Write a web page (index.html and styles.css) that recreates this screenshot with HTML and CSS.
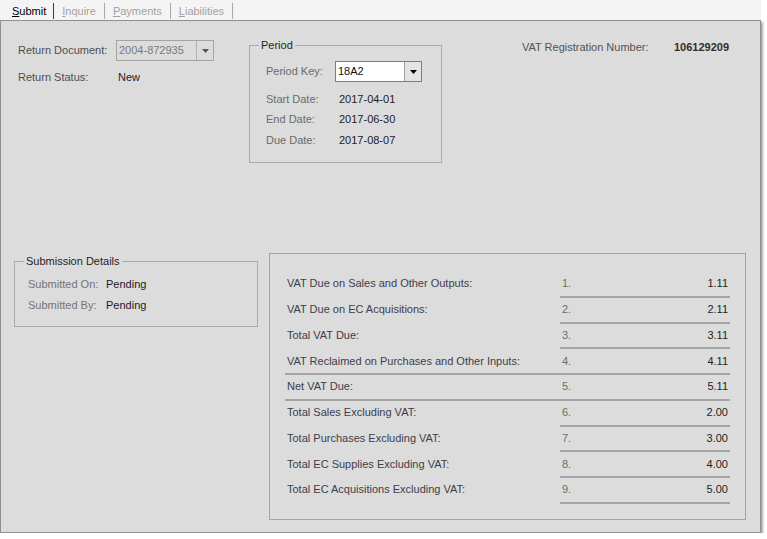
FILE: index.html
```html
<!DOCTYPE html>
<html>
<head>
<meta charset="utf-8">
<link rel="stylesheet" href="styles.css">
</head>
<body>
<div class="window">
  <div class="tabs">
    <div class="tab active"><u>S</u>ubmit</div>
    <div class="tab"><u>I</u>nquire</div>
    <div class="tab"><u>P</u>ayments</div>
    <div class="tab"><u>L</u>iabilities</div>
  </div>
  <div class="page">
    <div class="top">
      <div class="doc">
        <div class="row row-combo">
          <span class="lbl lbl-doc">Return Document:</span>
          <div class="combo combo-disabled combo-doc">
            <span class="combo-text">2004-872935</span>
            <span class="combo-btn"><svg width="7" height="4" viewBox="0 0 7 4"><path d="M0 0H7L3.5 4Z"/></svg></span>
          </div>
        </div>
        <div class="row row-status">
          <span class="lbl lbl-doc">Return Status:</span>
          <span class="val val-status">New</span>
        </div>
      </div>
      <fieldset class="group period">
        <legend>Period</legend>
        <div class="group-body period-body">
          <div class="row row-combo">
            <span class="plbl">Period Key:</span>
            <div class="combo combo-period">
              <span class="combo-text">18A2</span>
              <span class="combo-btn"><svg width="7" height="4" viewBox="0 0 7 4"><path d="M0 0H7L3.5 4Z"/></svg></span>
            </div>
          </div>
          <div class="prow first"><span class="plbl">Start Date:</span><span class="pval">2017-04-01</span></div>
          <div class="prow"><span class="plbl">End Date:</span><span class="pval">2017-06-30</span></div>
          <div class="prow"><span class="plbl">Due Date:</span><span class="pval">2017-08-07</span></div>
        </div>
      </fieldset>
      <div class="vatreg">
        <span class="vat-lbl">VAT Registration Number:</span>
        <span class="vat-val">106129209</span>
      </div>
    </div>
    <div class="bottom">
      <fieldset class="group submission">
        <legend>Submission Details</legend>
        <div class="group-body sub-body">
          <div class="srow"><span class="slbl">Submitted On:</span><span class="sval">Pending</span></div>
          <div class="srow"><span class="slbl">Submitted By:</span><span class="sval">Pending</span></div>
        </div>
      </fieldset>
      <div class="returns">
        <div class="rrow"><span class="rlbl">VAT Due on Sales and Other Outputs:</span><span class="rcell"><span class="rnum">1.</span><span class="rval">1.11</span></span></div>
        <div class="rrow"><span class="rlbl">VAT Due on EC Acquisitions:</span><span class="rcell"><span class="rnum">2.</span><span class="rval">2.11</span></span></div>
        <div class="rrow"><span class="rlbl">Total VAT Due:</span><span class="rcell"><span class="rnum">3.</span><span class="rval">3.11</span></span></div>
        <div class="rrow full"><span class="rlbl">VAT Reclaimed on Purchases and Other Inputs:</span><span class="rcell"><span class="rnum">4.</span><span class="rval">4.11</span></span></div>
        <div class="rrow full"><span class="rlbl">Net VAT Due:</span><span class="rcell"><span class="rnum">5.</span><span class="rval">5.11</span></span></div>
        <div class="rrow"><span class="rlbl">Total Sales Excluding VAT:</span><span class="rcell"><span class="rnum">6.</span><span class="rval">2.00</span></span></div>
        <div class="rrow"><span class="rlbl">Total Purchases Excluding VAT:</span><span class="rcell"><span class="rnum">7.</span><span class="rval">3.00</span></span></div>
        <div class="rrow"><span class="rlbl">Total EC Supplies Excluding VAT:</span><span class="rcell"><span class="rnum">8.</span><span class="rval">4.00</span></span></div>
        <div class="rrow"><span class="rlbl">Total EC Acquisitions Excluding VAT:</span><span class="rcell"><span class="rnum">9.</span><span class="rval">5.00</span></span></div>
      </div>
    </div>
  </div>
</div>
</body>
</html>
```
FILE: styles.css
```css
* { box-sizing: border-box; }
html, body { margin: 0; padding: 0; background: #ffffff; }
body {
  font-family: "Liberation Sans", Arial, sans-serif;
  font-size: 11px;
  line-height: 13px;
  color: #222;
}
.window { width: 761px; }

/* tabs */
.tabs {
  height: 20px;
  display: flex;
  align-items: stretch;
  padding: 3px 0 1px 4px;
  background: #f4f4f4;
}
.tab {
  padding: 0 8px 0 8px;
  border-right: 1px solid #a8a8a8;
  color: #a2a2a2;
  display: flex;
  align-items: center;
}
.tab.active { color: #000; border-right-color: #3a3a3a; padding-right: 7px; }
.tab u { text-decoration: underline; text-underline-offset: 1px; }

/* page */
.page {
  height: 513px;
  background: #dcdcdc;
  border: 1px solid #8f8f8f;
  box-shadow: 2px 2px 2px rgba(0,0,0,0.35);
}
.top {
  height: 232px;
  display: flex;
  align-items: flex-start;
}
.row { display: flex; align-items: center; }

/* return document */
.doc { margin: 19px 0 0 17px; width: 196px; }
.row-combo { height: 21px; }
.row-status { height: 20px; margin-top: 6px; }
.lbl { color: #4e4e4e; }
.lbl-doc { width: 98px; }
.val-status { padding-left: 2px; color: #1c1c30; }

.combo {
  height: 21px;
  display: flex;
  border: 1px solid #a3a3a3;
  background: #dcdcdc;
}
.combo-text { flex: 1; padding-left: 2px; display: flex; align-items: center; }
.combo-btn {
  width: 17px;
  border-left: 1px solid #b0b0b0;
  display: flex;
  align-items: center;
  justify-content: center;
}
.combo-doc { width: 98px; }
.combo-disabled .combo-text { color: #7a7a7a; }
.combo-disabled svg { fill: #555; }
.combo-period { width: 87px; background: #fff; border-color: #7d7d7d; }
.combo-period .combo-text { color: #111; }
.combo-period .combo-btn { background: #e4e4e4; border-left-color: #a0a0a0; }
.combo-period svg { fill: #000; }

/* group boxes */
.group {
  margin: 0;
  padding: 0;
  border: 1px solid #a9a9a9;
  min-width: 0;
}
.group legend {
  margin-left: 9px;
  padding: 0 2px;
  color: #1e1e1e;
  line-height: 13px;
}
.period {
  margin: 18px 0 0 35px;
  width: 193px;
  height: 124px;
}
.period-body { padding: 9px 0 0 16px; }
.plbl { width: 69px; color: #6a6a6a; }
.pval { padding-left: 4px; color: #222; }
.prow { height: 20.5px; display: flex; align-items: center; }
.prow.first { margin-top: 7px; }

/* vat reg */
.vatreg { margin: 20px 0 0 80px; display: flex; }
.vat-lbl { width: 152px; color: #525252; }
.vat-val { color: #2e2e2e; font-weight: bold; }

/* bottom */
.bottom { display: flex; align-items: flex-start; }
.submission {
  margin: 2px 0 0 13px;
  width: 244px;
  height: 72px;
}
.sub-body { padding: 6px 0 0 13px; }
.srow { height: 21px; display: flex; align-items: center; }
.slbl { width: 78px; color: #747474; }
.sval { color: #23182a; }

.returns {
  margin-left: 11px;
  width: 477px;
  height: 267px;
  border: 1px solid #a3a3a3;
  padding: 18px 0 0 15px;
}
.rrow {
  width: 445px;
  height: 25.75px;
  display: flex;
}
.rlbl {
  width: 275px;
  padding-left: 2px;
  height: 23.75px;
  display: flex;
  align-items: center;
  color: #3e3e4a;
}
.rcell {
  width: 170px;
  height: 25.75px;
  border-bottom: 2px solid #a4a4a4;
  display: flex;
  align-items: center;
  justify-content: space-between;
  padding: 0 2px;
}
.rrow.full { border-bottom: 2px solid #a4a4a4; }
.rrow.full .rcell { border-bottom: none; height: 23.75px; }
.rnum { color: #6c6c6c; }
.rval { color: #1e1e1e; }
```
